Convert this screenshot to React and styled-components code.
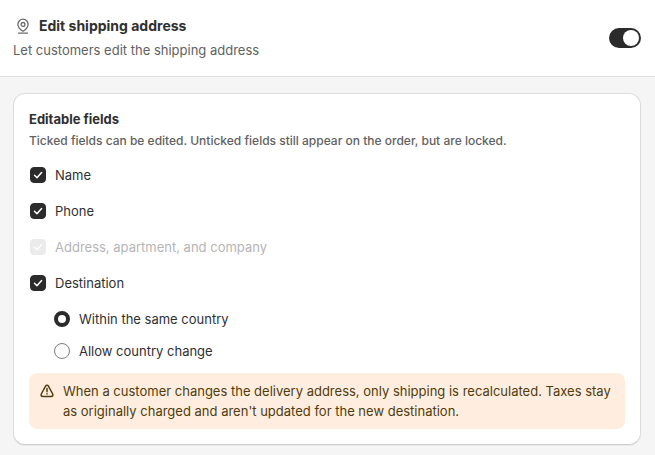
import React, { useState } from 'react';
import styled, { createGlobalStyle } from 'styled-components';


const App = () => {
    const [enabled, setEnabled] = useState(true);
    const [fields, setFields] = useState({ name: true, phone: true, address: true, destination: true });
    const [scope, setScope] = useState('same');

    const toggleField = (e) => {
        setFields({ ...fields, [e.target.name]: e.target.checked });
    }

    return (
        <>
            <GlobalStyle />
            <Header>
                <HeaderText>
                    <TitleRow>
                        <PinIcon />
                        <Title>Edit shipping address</Title>
                    </TitleRow>
                    <Subtitle>Let customers edit the shipping address</Subtitle>
                </HeaderText>
                <Switch
                    type="button"
                    role="switch"
                    aria-checked={enabled}
                    aria-label="Edit shipping address"
                    onClick={() => setEnabled(!enabled)}
                >
                    <Knob $on={enabled} />
                </Switch>
            </Header>

            <Main>
                <Card>
                    <CardTitle>Editable fields</CardTitle>
                    <Hint>Ticked fields can be edited. Unticked fields still appear on the order, but are locked.</Hint>

                    <FieldList>
                        <Field name="name" label="Name" checked={fields.name} onChange={toggleField} />
                        <Field name="phone" label="Phone" checked={fields.phone} onChange={toggleField} />
                        <Field name="address" label="Address, apartment, and company" checked={fields.address} onChange={toggleField} disabled />
                        <Field name="destination" label="Destination" checked={fields.destination} onChange={toggleField} />
                    </FieldList>

                    <RadioList role="radiogroup" aria-label="Destination">
                        <Option>
                            <Radio name="scope" checked={scope === 'same'} onChange={() => setScope('same')} />
                            Within the same country
                        </Option>
                        <Option>
                            <Radio name="scope" checked={scope === 'any'} onChange={() => setScope('any')} />
                            Allow country change
                        </Option>
                    </RadioList>

                    <Banner>
                        <WarningIcon />
                        <BannerText>
                            When a customer changes the delivery address, only shipping is recalculated. Taxes stay
                            as originally charged and aren't updated for the new destination.
                        </BannerText>
                    </Banner>
                </Card>
            </Main>
        </>
    )
}

const Field = ({ label, ...rest }) => (
    <Option $disabled={rest.disabled}>
        <CheckWrapper>
            <Checkbox {...rest} />
            <Tick viewBox="0 0 16 16" aria-hidden="true">
                <path d="M4.5 8.3 7 10.8l4.6-5.3" />
            </Tick>
        </CheckWrapper>
        {label}
    </Option>
)

const PinIcon = () => (
    <Icon viewBox="0 0 20 20" stroke="#6b6b6b" aria-hidden="true">
        <path d="M10 15.3c-2.1-1.2-5.1-3.7-5.1-7a5.1 5.1 0 0 1 10.2 0c0 3.3-3 5.8-5.1 7Z" />
        <circle cx="10" cy="8.4" r="1.9" />
        <path d="M5.5 17.2h9" />
    </Icon>
)

const WarningIcon = () => (
    <Icon viewBox="0 0 20 20" stroke="#4f3c0c" $weight="1.5" aria-hidden="true">
        <path d="M8.7 4.9a1.5 1.5 0 0 1 2.6 0l4.4 8.1c.7 1.3-.1 2.5-1.5 2.500H5.8c-1.4 0-2.2-1.2-1.5-2.5Z" />
        <path d="M10 7.500v3.200M10 12.700v.2" />
    </Icon>
)



const GlobalStyle = createGlobalStyle`
    * {
        box-sizing: border-box;
    }
    body {
        margin: 0;
        background: #f5f5f5;
        color: #303030;
        font-family: Inter, "Liberation Sans", sans-serif;
        font-size: 13px;
        line-height: 20px;
    }
`

const Header = styled.header`
    display: flex;
    align-items: center;
    justify-content: space-between;
    padding: 16px 14px 16px 13px;
    background: #fff;
    border-bottom: 1px solid #dedede;
`
const HeaderText = styled.div`
    display: flex;
    flex-direction: column;
    gap: 4px;
`
const TitleRow = styled.div`
    display: flex;
    align-items: center;
    gap: 6px;
`
const Title = styled.h1`
    margin: 0;
    font-size: 14px;
    font-weight: 650;
`
const Subtitle = styled.p`
    margin: 0;
    color: #616161;
`
const Icon = styled.svg`
    flex: none;
    width: 20px;
    height: 20px;
    fill: none;
    stroke-width: ${props => props.$weight || '1.3'};
    stroke-linecap: round;
    stroke-linejoin: round;
`
const Switch = styled.button`
    display: flex;
    width: 32px;
    height: 20px;
    padding: 2px;
    border: 0;
    border-radius: 10px;
    background: ${props => props['aria-checked'] ? '#2b2b2b' : '#8a8a8a'};
    cursor: pointer;
`
const Knob = styled.span`
    width: 16px;
    height: 16px;
    margin-left: ${props => props.$on ? 'auto' : '0'};
    border-radius: 50%;
    background: #fff;
`
const Main = styled.main`
    padding: 16px 14px 10px 13px;
`
const Card = styled.section`
    padding: 15px;
    background: #fff;
    border: 1px solid #dcdcdc;
    border-bottom-color: #cdcdcd;
    border-radius: 12px;
    box-shadow: 0 1px 0 rgba(0, 0, 0, 0.05);
`
const CardTitle = styled.h2`
    margin: 0;
    font-size: 13px;
    font-weight: 650;
`
const Hint = styled.p`
    margin: 2px 0 14px;
    color: #616161;
    font-size: 12px;
    font-weight: 450;
`
const FieldList = styled.div`
    display: flex;
    flex-direction: column;
    align-items: flex-start;
    gap: 16px;
    padding-left: 1px;
`
const RadioList = styled.div`
    display: flex;
    flex-direction: column;
    align-items: flex-start;
    gap: 12px;
    margin: 16px 0 12px;
    padding-left: 25px;
`
const Option = styled.label`
    display: flex;
    align-items: center;
    gap: 9px;
    color: ${props => props.$disabled ? '#b5b5b5' : '#303030'};
`
const CheckWrapper = styled.span`
    display: grid;
    width: 16px;
    height: 16px;
`
const Checkbox = styled.input.attrs({ type: 'checkbox' })`
    grid-area: 1 / 1;
    appearance: none;
    width: 16px;
    height: 16px;
    margin: 0;
    border: 1px solid #8a8a8a;
    border-radius: 4px;
    background: #fff;

    &:checked {
        border-color: #2b2b2b;
        background: #2b2b2b;
    }
    &:disabled {
        border-color: #ebebeb;
        background: #ebebeb;
    }
`
const Tick = styled.svg`
    grid-area: 1 / 1;
    fill: none;
    stroke: #fff;
    stroke-width: 1.5;
    stroke-linecap: round;
    stroke-linejoin: round;
    pointer-events: none;
`
const Radio = styled.input.attrs({ type: 'radio' })`
    appearance: none;
    width: 16px;
    height: 16px;
    margin: 0;
    border: 1px solid #7d7d7d;
    border-radius: 50%;
    background: #fdfdfd;

    &:checked {
        border: 4px solid #2b2b2b;
        background: #fff;
    }
`
const Banner = styled.div`
    display: flex;
    align-items: flex-start;
    gap: 6px;
    padding: 8px;
    border-radius: 8px;
    background: #ffeee0;
    color: #4f3c0c;
`
const BannerText = styled.p`
    margin: 0;
`

export default App;
